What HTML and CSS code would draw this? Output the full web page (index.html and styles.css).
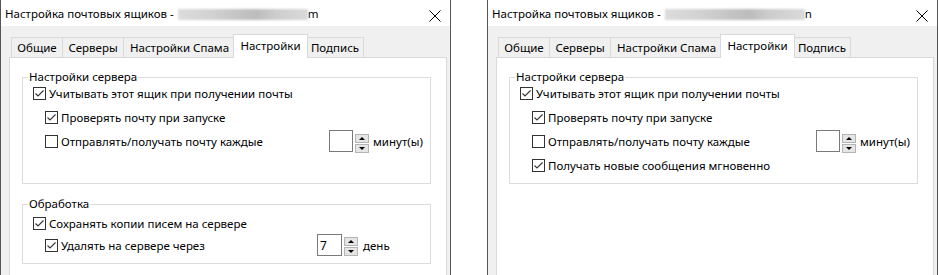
FILE: index.html
```html
<!DOCTYPE html>
<html lang="ru">
<head>
<meta charset="utf-8">
<title>Настройка почтовых ящиков</title>
<link rel="stylesheet" href="styles.css">
</head>
<body>
<div class="window">
  <div class="titlebar">
    <span class="title">Настройка почтовых ящиков -</span><span class="blur"></span><span class="title-tail">m</span>
    <svg class="close" width="12" height="12" viewBox="0 0 12 12"><path d="M0.5 0.5L11.5 11.5M11.5 0.5L0.5 11.5" stroke="#000" stroke-width="1" fill="none"/></svg>
  </div>
  <div class="client">
    <div class="tabs">
      <div class="tab tab-general">Общие</div>
      <div class="tab tab-servers">Серверы</div>
      <div class="tab tab-spam">Настройки Спама</div>
      <div class="tab tab-settings active">Настройки</div>
      <div class="tab tab-sign">Подпись</div>
    </div>
    <div class="panel">
      <fieldset class="group group-server group-short">
        <legend>Настройки сервера</legend>
        <div class="rows rows-server">
          <div class="row lvl1"><span class="cb"><svg width="11" height="11" viewBox="0 0 11 11"><path d="M1.5 5.5L4 8L9.5 2.5" stroke="#333" stroke-width="1.1" fill="none"/></svg></span>Учитывать этот ящик при получении почты</div>
          <div class="row lvl2"><span class="cb"><svg width="11" height="11" viewBox="0 0 11 11"><path d="M1.5 5.5L4 8L9.5 2.5" stroke="#333" stroke-width="1.1" fill="none"/></svg></span>Проверять почту при запуске</div>
          <div class="row lvl2">
            <span class="spin-label spin-label-minutes"><span class="cb"></span>Отправлять/получать почту каждые</span>
            <span class="spin-field"></span>
            <span class="spin-btns"><span class="spin-btn"><span class="arrow-up"></span></span><span class="spin-btn"><span class="arrow-down"></span></span></span>
            <span class="spin-unit">минут(ы)</span>
          </div>
        </div>
      </fieldset>
      <fieldset class="group group-processing">
        <legend>Обработка</legend>
        <div class="rows rows-processing">
          <div class="row lvl1"><span class="cb"><svg width="11" height="11" viewBox="0 0 11 11"><path d="M1.5 5.5L4 8L9.5 2.5" stroke="#333" stroke-width="1.1" fill="none"/></svg></span>Сохранять копии писем на сервере</div>
          <div class="row lvl2">
            <span class="spin-label spin-label-days"><span class="cb"><svg width="11" height="11" viewBox="0 0 11 11"><path d="M1.5 5.5L4 8L9.5 2.5" stroke="#333" stroke-width="1.1" fill="none"/></svg></span>Удалять на сервере через</span>
            <span class="spin-field spin-field-days">7</span>
            <span class="spin-btns"><span class="spin-btn"><span class="arrow-up"></span></span><span class="spin-btn"><span class="arrow-down"></span></span></span>
            <span class="spin-unit spin-unit-days">день</span>
          </div>
        </div>
      </fieldset>
    </div>
  </div>
</div>

<div class="window">
  <div class="titlebar">
    <span class="title">Настройка почтовых ящиков -</span><span class="blur blur-wide"></span><span class="title-tail">n</span>
    <svg class="close" width="12" height="12" viewBox="0 0 12 12"><path d="M0.5 0.5L11.5 11.5M11.5 0.5L0.5 11.5" stroke="#000" stroke-width="1" fill="none"/></svg>
  </div>
  <div class="client">
    <div class="tabs">
      <div class="tab tab-general">Общие</div>
      <div class="tab tab-servers">Серверы</div>
      <div class="tab tab-spam">Настройки Спама</div>
      <div class="tab tab-settings active">Настройки</div>
      <div class="tab tab-sign">Подпись</div>
    </div>
    <div class="panel">
      <fieldset class="group group-server">
        <legend>Настройки сервера</legend>
        <div class="rows rows-server">
          <div class="row lvl1"><span class="cb"><svg width="11" height="11" viewBox="0 0 11 11"><path d="M1.5 5.5L4 8L9.5 2.5" stroke="#333" stroke-width="1.1" fill="none"/></svg></span>Учитывать этот ящик при получении почты</div>
          <div class="row lvl2"><span class="cb"><svg width="11" height="11" viewBox="0 0 11 11"><path d="M1.5 5.5L4 8L9.5 2.5" stroke="#333" stroke-width="1.1" fill="none"/></svg></span>Проверять почту при запуске</div>
          <div class="row lvl2">
            <span class="spin-label spin-label-minutes"><span class="cb"></span>Отправлять/получать почту каждые</span>
            <span class="spin-field"></span>
            <span class="spin-btns"><span class="spin-btn"><span class="arrow-up"></span></span><span class="spin-btn"><span class="arrow-down"></span></span></span>
            <span class="spin-unit">минут(ы)</span>
          </div>
          <div class="row lvl2"><span class="cb"><svg width="11" height="11" viewBox="0 0 11 11"><path d="M1.5 5.5L4 8L9.5 2.5" stroke="#333" stroke-width="1.1" fill="none"/></svg></span>Получать новые сообщения мгновенно</div>
        </div>
      </fieldset>
    </div>
  </div>
</div>
</body>
</html>
```

FILE: styles.css
```css
* { box-sizing: border-box; }

html, body {
  margin: 0;
  padding: 0;
  background: #fff;
}

body {
  display: flex;
  gap: 36px;
  width: 938px;
  height: 275px;
  overflow: hidden;
  font-family: "Noto Sans", "Segoe UI", sans-serif;
  font-size: 11.5px;
  color: #000;
}

.window {
  width: 451px;
  height: 275px;
  flex-shrink: 0;
  display: flex;
  flex-direction: column;
  background: #f0f0f0;
  border-left: 1px solid #555;
  border-right: 1px solid #555;
}

.titlebar {
  height: 26px;
  flex-shrink: 0;
  display: flex;
  align-items: center;
  background: #fff;
  padding: 1px 9px 0 4px;
  white-space: nowrap;
}

.blur {
  width: 130px;
  height: 11px;
  margin-left: 4px;
  margin-top: 2px;
  background: linear-gradient(90deg, #dcdcdc 0%, #d2d2d2 25%, #c2c2c2 50%, #bcbcbc 60%, #cdcdcd 75%, #dadada 100%);
  filter: blur(0.8px);
}

.blur-wide { width: 140px; }

.close {
  margin-left: auto;
  align-self: flex-start;
  margin-top: 9px;
}

.client {
  flex: 1;
  display: flex;
  flex-direction: column;
  padding: 8px 3px 0 8px;
}

.tabs {
  display: flex;
  align-items: flex-end;
  height: 23px;
  padding-left: 2px;
  flex-shrink: 0;
}

.tab {
  height: 20px;
  display: flex;
  align-items: center;
  justify-content: center;
  white-space: nowrap;
  background: #f0f0f0;
  border: 1px solid #d9d9d9;
  border-bottom: none;
  border-right: none;
}

.tab-general { width: 51px; }
.tab-servers { width: 61px; }
.tab-spam { width: 112px; }
.tab-settings { width: 75px; }
.tab-sign { width: 58px; border-right: 1px solid #d9d9d9; }

.tab.active {
  height: 24px;
  margin: 0 -2px -1px;
  padding-bottom: 2px;
  background: #fff;
  border-right: 1px solid #d9d9d9;
  position: relative;
  z-index: 1;
}

.panel {
  flex: 1;
  background: #fff;
  border: 1px solid #d9d9d9;
  border-bottom: none;
  padding: 13px 15px 0 12px;
}

.group {
  margin: 0;
  min-width: 0;
  border: 1px solid #dcdcdc;
  padding: 0 0 6px 10px;
}

.group legend {
  padding: 0 1px;
  margin-left: -5px;
  line-height: 12px;
}

.group-short { padding-bottom: 30px; }

.group-processing {
  margin-top: 14px;
  padding-bottom: 7px;
}

.rows-server { margin-top: -2px; }
.rows-processing { margin-top: 2px; }

.row {
  display: flex;
  align-items: center;
  height: 24px;
  white-space: nowrap;
}

.rows-processing .row { height: 22px; }

.lvl2 { padding-left: 12px; }

.cb {
  width: 13px;
  height: 13px;
  flex-shrink: 0;
  border: 1px solid #333;
  background: #fff;
  margin-right: 3px;
  display: flex;
  align-items: center;
  justify-content: center;
}

.spin-label {
  display: flex;
  align-items: center;
  flex-shrink: 0;
}

.spin-label-minutes { width: 284px; }
.spin-label-days { width: 272px; }

.spin-field {
  width: 24px;
  height: 22px;
  flex-shrink: 0;
  border: 1px solid #7a7a7a;
  background: #fff;
  padding-left: 2px;
  display: flex;
  align-items: center;
  font-size: 12px;
}

.spin-field-days { width: 25px; }

.spin-btns {
  width: 14px;
  height: 19px;
  margin-left: 2px;
  align-self: flex-end;
  display: flex;
  flex-direction: column;
  gap: 1px;
}

.spin-btn {
  flex: 1;
  background: #e5e5e5;
  border: 1px solid #b4b4b4;
  display: flex;
  align-items: center;
  justify-content: center;
}

.arrow-up {
  width: 0;
  height: 0;
  border-left: 3px solid transparent;
  border-right: 3px solid transparent;
  border-bottom: 3px solid #000;
}

.arrow-down {
  width: 0;
  height: 0;
  border-left: 3px solid transparent;
  border-right: 3px solid transparent;
  border-top: 3px solid #000;
}

.spin-unit { margin-left: 4px; }
.spin-unit-days { margin-left: 5px; }
```
